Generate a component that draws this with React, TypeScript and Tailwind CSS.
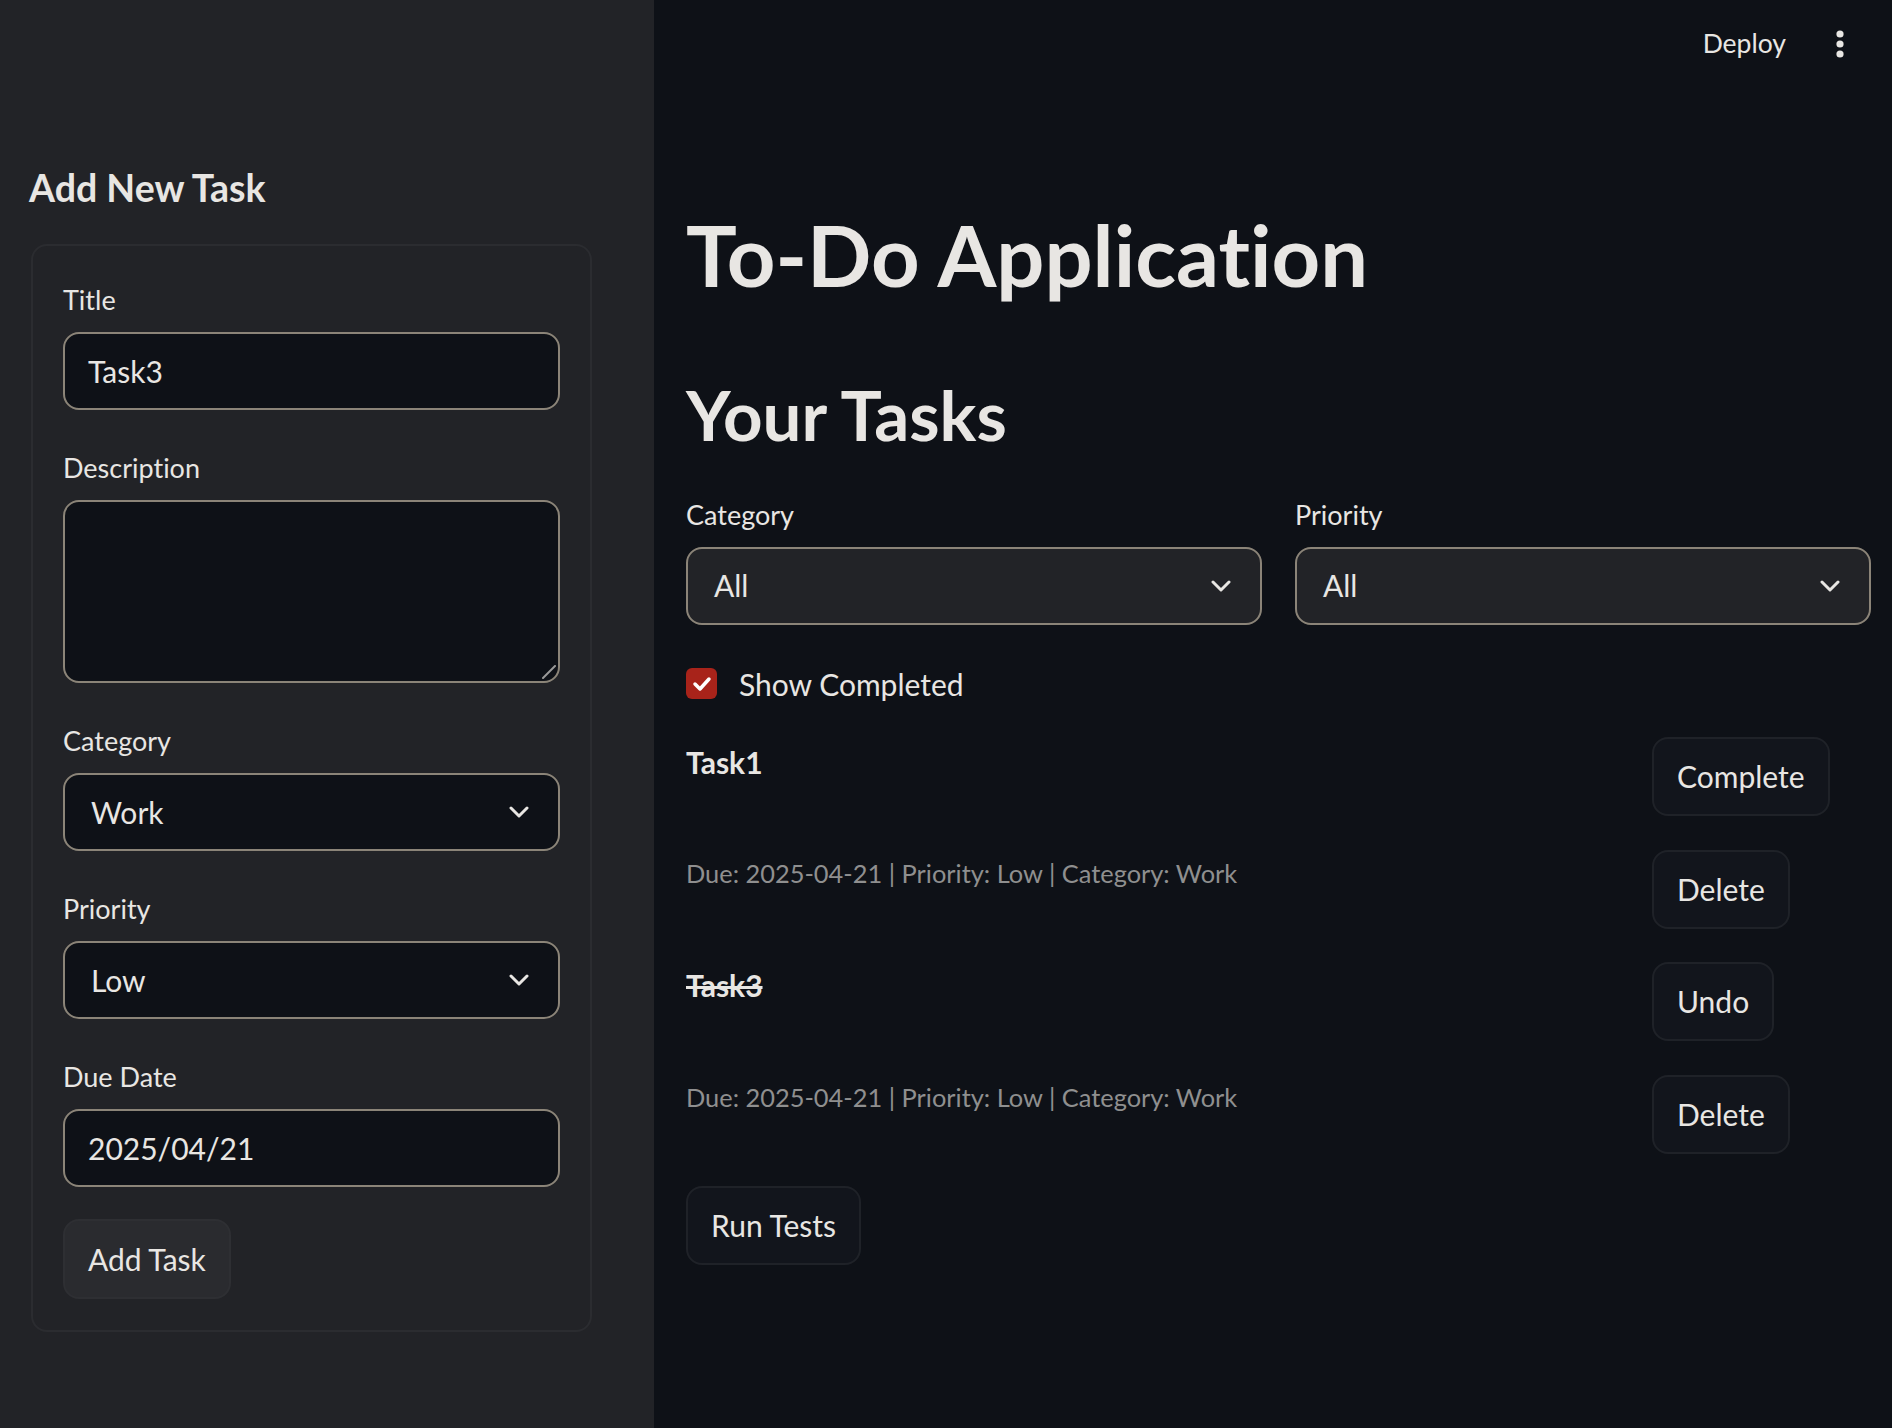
import React from 'react';

const Chevron = () => (
  <svg width="20" height="12" viewBox="0 0 20 12" fill="none" className="shrink-0">
    <polyline points="2,2 10,10 18,2" stroke="#e8e6e3" strokeWidth="3" strokeLinecap="round" strokeLinejoin="round" />
  </svg>
);

const Label = ({ children }: { children: React.ReactNode }) => (
  <div className="h-[58px] pt-[10px] text-[27px] leading-[1.2]">{children}</div>
);

const Select = ({ value, bg }: { value: string; bg: string }) => (
  <div className={`flex h-[78px] items-center justify-between rounded-[16px] border-2 border-[#8b8478] pl-[26px] pr-[29px] text-[30px] ${bg}`}>
    <span>{value}</span>
    <Chevron />
  </div>
);

const Btn = ({ children }: { children: React.ReactNode }) => (
  <button className="h-[79px] rounded-[16px] border-2 border-[#1f2228] bg-[#12151c] px-[23px] text-[30px] text-[#e8e6e3]">
    {children}
  </button>
);

const meta = 'Due: 2025-04-21 | Priority: Low | Category: Work';

export default function App() {
  return (
    <div className="flex min-h-screen w-full bg-[#0e1117] font-['Lato',sans-serif] text-[#e8e6e3] [font-variant-ligatures:none]">
      {/* Sidebar */}
      <aside className="w-[654px] shrink-0 bg-[#222327] pl-[31px] pr-[62px] pt-[165px] pb-[80px]">
        <h2 className="-ml-[2px] text-[37.5px] font-bold leading-[1.2]">Add New Task</h2>
        <div className="mt-[34px] rounded-[16px] border-2 border-[#2b2c30] px-[30px] pt-[28px] pb-[31px]">
          <div className="flex flex-col gap-[32px]">
            <div>
              <Label>Title</Label>
              <div className="flex h-[78px] items-center rounded-[16px] border-2 border-[#8b8478] bg-[#0e1117] px-[23px] text-[30px]">
                Task3
              </div>
            </div>
            <div>
              <Label>Description</Label>
              <div className="relative h-[183px] rounded-[16px] border-2 border-[#8b8478] bg-[#0e1117]">
                <svg className="absolute bottom-[2px] right-[2px]" width="14" height="14" viewBox="0 0 14 14">
                  <line x1="1" y1="13" x2="13" y2="1" stroke="#9a9a9a" strokeWidth="2" strokeLinecap="round" />
                </svg>
              </div>
            </div>
            <div>
              <Label>Category</Label>
              <Select value="Work" bg="bg-[#0e1117]" />
            </div>
            <div>
              <Label>Priority</Label>
              <Select value="Low" bg="bg-[#0e1117]" />
            </div>
            <div>
              <Label>Due Date</Label>
              <div className="flex h-[78px] items-center rounded-[16px] border-2 border-[#8b8478] bg-[#0e1117] px-[23px] text-[30px]">
                2025/04/21
              </div>
            </div>
            <div>
              <button className="h-[80px] rounded-[16px] border-2 border-[#2e2f33] bg-[#2a2b2f] px-[23px] text-[30px] text-[#e8e6e3]">
                Add Task
              </button>
            </div>
          </div>
        </div>
      </aside>

      {/* Main */}
      <main className="flex-1">
        <header className="flex h-[88px] items-center justify-end pr-[47px]">
          <span className="text-[26.5px]">Deploy</span>
          <svg className="ml-[49px]" width="10" height="28" viewBox="0 0 10 28">
            <circle cx="5" cy="4" r="3.6" fill="#e8e6e3" />
            <circle cx="5" cy="14" r="3.6" fill="#e8e6e3" />
            <circle cx="5" cy="24" r="3.6" fill="#e8e6e3" />
          </svg>
        </header>

        <div className="pl-[32px] pr-[21px] pt-[116px] pb-[100px]">
          <h1 className="text-[84.8px] font-bold leading-[1.2]">To-Do Application</h1>
          <h2 className="mt-[68px] text-[69px] font-bold leading-[1.2]">Your Tasks</h2>

          <div className="mt-[32px] grid grid-cols-2 gap-[33px]">
            <div>
              <Label>Category</Label>
              <Select value="All" bg="bg-[#222327]" />
            </div>
            <div>
              <Label>Priority</Label>
              <Select value="All" bg="bg-[#222327]" />
            </div>
          </div>

          <div className="mt-[41px] flex items-center gap-[22px]">
            <div className="flex h-[31px] w-[31px] items-center justify-center rounded-[6px] bg-[#a8231a]">
              <svg width="20" height="16" viewBox="0 0 20 16" fill="none">
                <polyline points="3,8 8,13 17,3" stroke="#ffffff" strokeWidth="3.5" strokeLinecap="round" strokeLinejoin="round" />
              </svg>
            </div>
            <span className="text-[30px] leading-[1.2]">Show Completed</span>
          </div>

          <div className="mt-[35px] flex flex-col gap-[33px]">
            <div className="flex">
              <div className="flex-1">
                <div className="pt-[7px] text-[30px] font-bold leading-[1.2]">Task1</div>
                <div className="mt-[78px] text-[25.4px] leading-[1.2] text-[#8f8f8f]">{meta}</div>
              </div>
              <div className="flex w-[219px] flex-col items-start gap-[34px]">
                <Btn>Complete</Btn>
                <Btn>Delete</Btn>
              </div>
            </div>
            <div className="flex">
              <div className="flex-1">
                <div className="pt-[5px] text-[30px] font-bold leading-[1.2] line-through">Task3</div>
                <div className="mt-[79px] text-[25.4px] leading-[1.2] text-[#8f8f8f]">{meta}</div>
              </div>
              <div className="flex w-[219px] flex-col items-start gap-[34px]">
                <Btn>Undo</Btn>
                <Btn>Delete</Btn>
              </div>
            </div>
          </div>

          <div className="mt-[32px]">
            <Btn>Run Tests</Btn>
          </div>
        </div>
      </main>
    </div>
  );
}
